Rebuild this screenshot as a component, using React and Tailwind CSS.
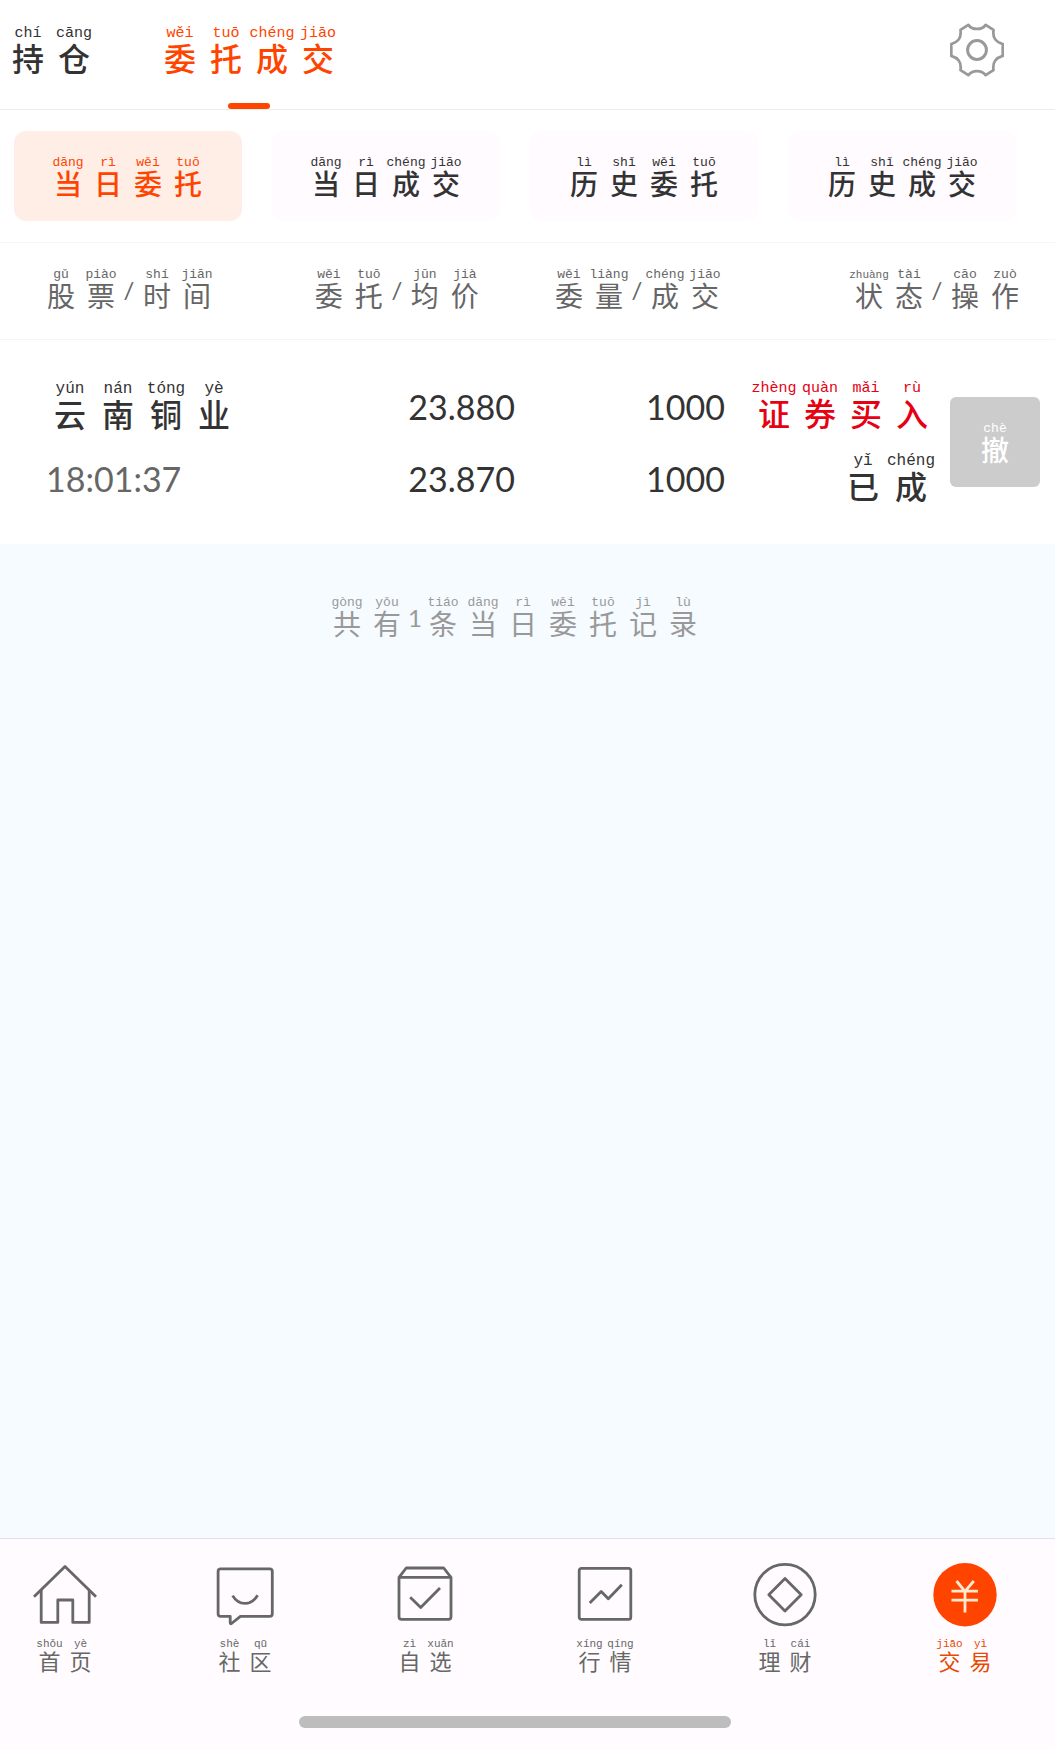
import React, { useState } from 'react';

const sizes = {
  sm: { cell: 'w-[31px]', rt: 'text-[11px] leading-3', hz: 'text-[22px] leading-5' },
  md: { cell: 'w-10', rt: 'text-[13px] leading-[14px]', hz: 'text-[28px] leading-[26px]' },
  lg: { cell: 'w-[46px]', rt: 'text-[15px] leading-4', hz: 'text-[32px] leading-[30px]' },
  xl: { cell: 'w-12', rt: 'text-base leading-[18px]', hz: 'text-[32px] leading-[30px]' },
};

// words: list of [character, pinyin]; an entry without pinyin is a plain mark
const Pinyin = ({ words, size = 'md' }) => {
  const s = sizes[size];
  return (
    <span className="inline-flex align-top">
      {words.map(([hz, py], index) =>
        py ? (
          <ruby key={index} className={`flex flex-col-reverse items-center whitespace-nowrap ${s.cell}`}>
            <span className={`block font-['Noto_Sans_CJK_SC',sans-serif] ${s.hz}`}>{hz}</span>
            <rt
              className={`block font-['Liberation_Mono',monospace] ${
                py.length > 5 ? 'text-[11px] leading-[14px]' : s.rt
              }`}
            >
              {py}
            </rt>
          </ruby>
        ) : (
          <span key={index} className="h-10 w-4 text-center text-2xl leading-[44px] font-['Lato',sans-serif]">
            {hz}
          </span>
        )
      )}
    </span>
  );
};

const WEI_TUO = [['委', 'wěi'], ['托', 'tuō']];
const CHENG_JIAO = [['成', 'chéng'], ['交', 'jiāo']];
const DANG_RI = [['当', 'dāng'], ['日', 'rì']];
const LI_SHI = [['历', 'lì'], ['史', 'shǐ']];

const tabs = [
  [['持', 'chí'], ['仓', 'cāng']],
  [...WEI_TUO, ...CHENG_JIAO],
];

const filters = [
  [...DANG_RI, ...WEI_TUO],
  [...DANG_RI, ...CHENG_JIAO],
  [...LI_SHI, ...WEI_TUO],
  [...LI_SHI, ...CHENG_JIAO],
];

const Icon = ({ children }) => (
  <svg
    viewBox="0 0 64 64"
    className="size-16"
    fill="none"
    stroke="currentColor"
    strokeWidth="2.8"
    strokeLinejoin="round"
    aria-hidden="true"
  >
    {children}
  </svg>
);

const navItems = [
  {
    words: [['首', 'shǒu'], ['页', 'yè']],
    icon: (
      <Icon>
        <path d="M1 33.7 32 3.4l31 30.3" />
        <path d="M8.2 27v32.4h16.6V37h15v22.4h16.4V27" />
      </Icon>
    ),
  },
  {
    words: [['社', 'shè'], ['区', 'qū']],
    icon: (
      <Icon>
        <path d="M7.7 5.9h49a2.6 2.6 0 0 1 2.6 2.6v42.2a2.6 2.6 0 0 1-2.6 2.6H27.4L18.5 60.5q-1.3.8-1.3-1v-6.2H7.7a2.6 2.6 0 0 1-2.6-2.6V8.5a2.6 2.6 0 0 1 2.6-2.6z" />
        <path d="M19.6 32.6q4.6 7.8 12.4 7.8t12.6-8.2" />
      </Icon>
    ),
  },
  {
    words: [['自', 'zì'], ['选', 'xuǎn']],
    icon: (
      <Icon>
        <path d="M6 14.4h52v39.4a2.6 2.6 0 0 1-2.6 2.6H8.6A2.6 2.6 0 0 1 6 53.8zL13.2 5h37.5L58 14.4" />
        <path d="m17.2 34.3 10.5 10.3L47 25" />
      </Icon>
    ),
  },
  {
    words: [['行', 'xíng'], ['情', 'qíng']],
    icon: (
      <Icon>
        <rect x="6.2" y="5.4" width="51.6" height="51" rx="2.2" />
        <path d="M16.7 40 28.2 28.4l7.1 7.3 13.5-14" />
      </Icon>
    ),
  },
  {
    words: [['理', 'lǐ'], ['财', 'cái']],
    icon: (
      <Icon>
        <circle cx="32" cy="31.6" r="30.2" />
        <path d="M32 15.4 48.2 31.7 32 48 15.8 31.7z" />
      </Icon>
    ),
  },
  {
    words: [['交', 'jiāo'], ['易', 'yì']],
    active: true,
    icon: (
      <Icon>
        <circle cx="32" cy="31.7" r="31.7" fill="#ff4400" stroke="none" />
        <path stroke="#ffe9d0" d="M23.5 18 32 28.4 40.8 18M18.5 28.2h26.4M18.5 37.2h26.4M32 28v21.4" />
      </Icon>
    ),
  },
];

const Line = ({ children, className = '' }) => (
  <div className={`flex h-[72px] items-center ${className}`}>{children}</div>
);

const App = () => {
  const [tab, setTab] = useState(1);
  const [filter, setFilter] = useState(0);

  return (
    <div className="flex min-h-screen flex-col bg-[#f6fbff] font-['Lato','Noto_Sans_CJK_SC',sans-serif] text-[#333]">
      <header className="flex h-[110px] items-start justify-between border-b border-[#ececec] bg-white pr-[51px] pl-[5px]">
        <div className="flex h-full gap-[60px]">
          {tabs.map((words, index) => (
            <button
              key={index}
              type="button"
              onClick={() => setTab(index)}
              className={`flex flex-col items-center justify-between pt-[26px] font-medium ${
                tab === index ? 'text-[#ff4400]' : ''
              }`}
            >
              <Pinyin words={words} size="lg" />
              {tab === index && <span className="h-[6px] w-[42px] rounded-full bg-[#ff4400]" />}
            </button>
          ))}
        </div>
        <button type="button" aria-label="设置" className="mt-[23px]">
          <svg viewBox="-27.5 -27.5 55 55" className="size-[54px]" fill="none" stroke="#999" strokeWidth="2.8" strokeLinejoin="round">
            <path d="M-8.8-25.6Q-6-21.4 0-21.4T8.8-25.6L16.8-20.4Q16-14 18.6-10.7T26.2-6V6Q21.2 7.4 18.6 10.7T16.8 20.4L8.8 25.6Q6 21.4 0 21.4T-8.8 25.6L-16.8 20.4Q-16 14-18.6 10.7T-26.2 6V-6Q-21.2-7.4-18.6-10.7T-16.8-20.4z" />
            <circle r="9.6" strokeWidth="3" />
          </svg>
        </button>
      </header>

      <div className="grid grid-cols-4 gap-[30px] bg-white pt-[21px] pr-[39px] pb-[21px] pl-[14px]">
        {filters.map((words, index) => (
          <button
            key={index}
            type="button"
            onClick={() => setFilter(index)}
            className={`flex h-[90px] items-center justify-center rounded-xl font-medium ${
              filter === index ? 'bg-[#ffeee6] text-[#ff4400]' : 'bg-[#fffbff]'
            }`}
          >
            <Pinyin words={words} />
          </button>
        ))}
      </div>

      <table className="w-full table-fixed bg-white">
        <thead className="border-t border-b border-[#f5f5f5] text-[#666]">
          <tr className="h-[97px]">
            <th className="w-[27%] pb-[6px] pl-[41px] text-left align-middle font-normal">
              <Pinyin words={[['股', 'gǔ'], ['票', 'piào'], ['/'], ['时', 'shí'], ['间', 'jiān']]} />
            </th>
            <th className="w-[22%] pb-[6px] pl-6 text-left align-middle font-normal">
              <Pinyin words={[...WEI_TUO, ['/'], ['均', 'jūn'], ['价', 'jià']]} />
            </th>
            <th className="w-[20%] pr-[3px] pb-[6px] text-right align-middle font-normal">
              <Pinyin words={[['委', 'wěi'], ['量', 'liàng'], ['/'], ...CHENG_JIAO]} />
            </th>
            <th className="pr-[30px] pb-[6px] text-right align-middle font-normal">
              <Pinyin words={[['状', 'zhuàng'], ['态', 'tài'], ['/'], ['操', 'cāo'], ['作', 'zuò']]} />
            </th>
          </tr>
        </thead>
        <tbody>
          <tr className="text-[34px]">
            <td className="py-[30px] pl-[46px]">
              <Line className="pb-1 font-medium">
                <Pinyin size="xl" words={[['云', 'yún'], ['南', 'nán'], ['铜', 'tóng'], ['业', 'yè']]} />
              </Line>
              <Line className="text-[#666]">18:01:37</Line>
            </td>
            <td className="py-[30px] pr-[2px]">
              <Line className="justify-end">23.880</Line>
              <Line className="justify-end">23.870</Line>
            </td>
            <td className="py-[30px] pr-[3px]">
              <Line className="justify-end">1000</Line>
              <Line className="justify-end">1000</Line>
            </td>
            <td className="py-[30px] pr-[15px]">
              <div className="flex items-center justify-end gap-[15px] font-medium">
                <div>
                  <Line className="justify-end pb-1 text-[#e60012]">
                    <Pinyin size="lg" words={[['证', 'zhèng'], ['券', 'quàn'], ['买', 'mǎi'], ['入', 'rù']]} />
                  </Line>
                  <Line className="justify-end pb-1">
                    <Pinyin size="xl" words={[['已', 'yǐ'], ['成', 'chéng']]} />
                  </Line>
                </div>
                <button
                  type="button"
                  className="flex size-[90px] items-center justify-center rounded-md bg-[#ccc] text-white"
                >
                  <Pinyin words={[['撤', 'chè']]} />
                </button>
              </div>
            </td>
          </tr>
        </tbody>
      </table>

      <main className="flex-1 pt-[52px] pr-[25px] text-center text-[#999]">
        <Pinyin
          words={[
            ['共', 'gòng'],
            ['有', 'yǒu'],
            ['1'],
            ['条', 'tiáo'],
            ...DANG_RI,
            ...WEI_TUO,
            ['记', 'jì'],
            ['录', 'lù'],
          ]}
        />
      </main>

      <footer className="border-t border-[#e2e2e8] bg-[#fffbff] pr-[25px] pb-[21px]">
        <nav className="flex justify-between px-[33px] pt-6">
          {navItems.map(({ words, icon, active }, index) => (
            <a
              key={index}
              href="#"
              className={`flex w-16 flex-col items-center gap-[11px] ${active ? 'text-[#e64a00]' : 'text-[#666866]'}`}
            >
              {icon}
              <Pinyin words={words} size="sm" />
            </a>
          ))}
        </nav>
        <div className="mx-auto mt-[46px] h-3 w-[42%] rounded-full bg-[#bdbdbd]" />
      </footer>
    </div>
  );
};

export default App;
